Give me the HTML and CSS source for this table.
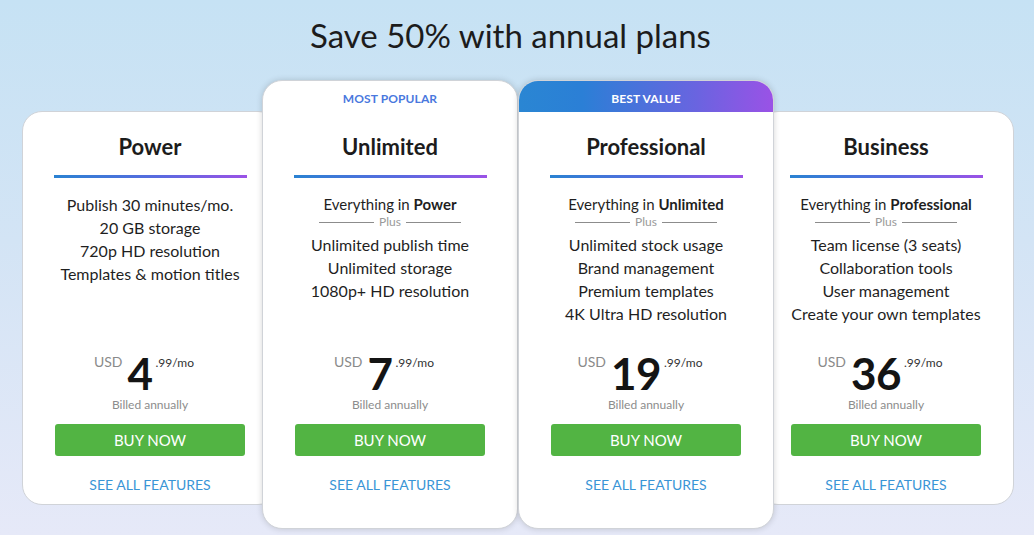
FILE: index.html
```html
<!DOCTYPE html>
<html lang="en">
<head>
<meta charset="utf-8">
<title>Save 50% with annual plans</title>
<link rel="stylesheet" href="styles.css">
</head>
<body>
<main class="page">
  <h1 class="headline">Save 50% with annual plans</h1>
  <div class="plans">
    <section class="card card-side">
      <div class="card-body">
        <h2 class="plan-name">Power</h2>
        <div class="bar"></div>
        <div class="features">
          <p>Publish 30 minutes/mo.</p>
          <p>20 GB storage</p>
          <p>720p HD resolution</p>
          <p>Templates &amp; motion titles</p>
        </div>
        <div class="price"><span class="cur">USD</span><span class="amount">4</span><span class="cents">.99/mo</span></div>
        <div class="billed">Billed annually</div>
        <a class="buy" href="#">BUY NOW</a>
        <a class="see" href="#">SEE ALL FEATURES</a>
      </div>
    </section>
    <section class="card card-mid card-popular">
      <div class="card-label">MOST POPULAR</div>
      <div class="card-body">
        <h2 class="plan-name">Unlimited</h2>
        <div class="bar"></div>
        <div class="features">
          <p class="inherit">Everything in <b>Power</b></p>
          <div class="plus"><span class="rule"></span><span>Plus</span><span class="rule"></span></div>
          <div class="more">
            <p>Unlimited publish time</p>
            <p>Unlimited storage</p>
            <p>1080p+ HD resolution</p>
          </div>
        </div>
        <div class="price"><span class="cur">USD</span><span class="amount">7</span><span class="cents">.99/mo</span></div>
        <div class="billed">Billed annually</div>
        <a class="buy" href="#">BUY NOW</a>
        <a class="see" href="#">SEE ALL FEATURES</a>
      </div>
    </section>
    <section class="card card-mid card-best">
      <div class="card-label">BEST VALUE</div>
      <div class="card-body">
        <h2 class="plan-name">Professional</h2>
        <div class="bar"></div>
        <div class="features">
          <p class="inherit">Everything in <b>Unlimited</b></p>
          <div class="plus"><span class="rule"></span><span>Plus</span><span class="rule"></span></div>
          <div class="more">
            <p>Unlimited stock usage</p>
            <p>Brand management</p>
            <p>Premium templates</p>
            <p>4K Ultra HD resolution</p>
          </div>
        </div>
        <div class="price"><span class="cur">USD</span><span class="amount">19</span><span class="cents">.99/mo</span></div>
        <div class="billed">Billed annually</div>
        <a class="buy" href="#">BUY NOW</a>
        <a class="see" href="#">SEE ALL FEATURES</a>
      </div>
    </section>
    <section class="card card-side card-last">
      <div class="card-body">
        <h2 class="plan-name">Business</h2>
        <div class="bar"></div>
        <div class="features">
          <p class="inherit">Everything in <b>Professional</b></p>
          <div class="plus"><span class="rule"></span><span>Plus</span><span class="rule"></span></div>
          <div class="more">
            <p>Team license (3 seats)</p>
            <p>Collaboration tools</p>
            <p>User management</p>
            <p>Create your own templates</p>
          </div>
        </div>
        <div class="price"><span class="cur">USD</span><span class="amount">36</span><span class="cents">.99/mo</span></div>
        <div class="billed">Billed annually</div>
        <a class="buy" href="#">BUY NOW</a>
        <a class="see" href="#">SEE ALL FEATURES</a>
      </div>
    </section>
  </div>
</main>
</body>
</html>
```

FILE: styles.css
```css
* { box-sizing: border-box; }

html, body {
  margin: 0;
  height: 100%;
}

body {
  font-family: Lato, "Noto Sans", "Liberation Sans", sans-serif;
  color: #1c1c1c;
  background: linear-gradient(180deg, #c6e2f4 0%, #d3e4f5 45%, #e6e9f8 100%);
  overflow: hidden;
}

.page {
  padding-top: 15px;
}

.headline {
  margin: 0;
  padding-right: 13px;
  font-size: 33px;
  line-height: 40px;
  font-weight: 400;
  text-align: center;
  color: #1c1c1c;
}

.plans {
  margin-top: 25px;
  padding-left: 2px;
  display: flex;
  justify-content: center;
  align-items: flex-start;
}

.card {
  width: 256px;
  background: #fff;
  border: 1px solid #d0d3d8;
  border-radius: 20px;
  position: relative;
  overflow: hidden;
}

.card-side {
  margin-top: 31px;
  z-index: 1;
}

.card-last {
  margin-left: -16px;
}

.card-mid {
  z-index: 2;
  padding-bottom: 24px;
  border-radius: 20px;
  box-shadow: 0 0 6px rgba(0, 0, 0, 0.16);
}

.card-popular {
  margin-left: -16px;
}

.card-label {
  height: 31px;
  padding-top: 3px;
  display: flex;
  align-items: center;
  justify-content: center;
  font-size: 12px;
  font-weight: 700;
  letter-spacing: 0.1px;
}

.card-popular .card-label {
  color: #4a78de;
}

.card-best .card-label {
  color: #fff;
  background: linear-gradient(90deg, #2a86d3 0%, #2b7fd6 25%, #6a64e0 70%, #9a52e6 100%);
}

.card-body {
  height: 392px;
  padding: 21px 0 9px;
  display: flex;
  flex-direction: column;
  align-items: center;
  text-align: center;
}

.plan-name {
  margin: 0;
  font-size: 22px;
  line-height: 28px;
  font-weight: 700;
  color: #1c1c1c;
}

.bar {
  margin-top: 14px;
  width: 193px;
  height: 3px;
  background: linear-gradient(90deg, #2a82d2 0%, #5a6ae0 55%, #9b52e6 100%);
}

.features {
  margin-top: 15px;
  flex: 1;
  width: 100%;
  font-size: 16px;
  line-height: 23px;
  color: #1f1f1f;
}

.features p {
  margin: 0;
}

.features .inherit {
  font-size: 15px;
  line-height: 22px;
}

.features .inherit b {
  font-weight: 700;
}

.plus {
  display: flex;
  align-items: center;
  justify-content: center;
  gap: 5px;
  height: 14px;
  font-size: 12px;
  line-height: 14px;
  color: #9a9a9a;
}

.plus .rule {
  width: 55px;
  height: 1px;
  background: #8c8c8c;
}

.more {
  margin-top: 4px;
}

.price {
  display: flex;
  align-items: flex-start;
  justify-content: center;
  height: 44px;
  margin-right: 12px;
}

.cur {
  margin-top: 4px;
  margin-right: 5px;
  font-size: 14px;
  line-height: 14px;
  color: #8a8a8a;
}

.amount {
  font-size: 44px;
  line-height: 44px;
  font-weight: 700;
  color: #141414;
  letter-spacing: -0.5px;
}

.cents {
  margin-top: 6px;
  margin-left: 3px;
  font-size: 12px;
  line-height: 12px;
  color: #333;
}

.billed {
  margin-top: 2px;
  font-size: 12px;
  line-height: 16px;
  color: #8c8c8c;
}

.buy {
  margin-top: 11px;
  width: 190px;
  height: 32px;
  display: flex;
  align-items: center;
  justify-content: center;
  background: #52b443;
  border-radius: 3px;
  color: #fff;
  font-size: 15px;
  text-decoration: none;
}

.see {
  margin-top: 19px;
  font-size: 14px;
  line-height: 20px;
  color: #3a95d6;
  text-decoration: none;
}
```
